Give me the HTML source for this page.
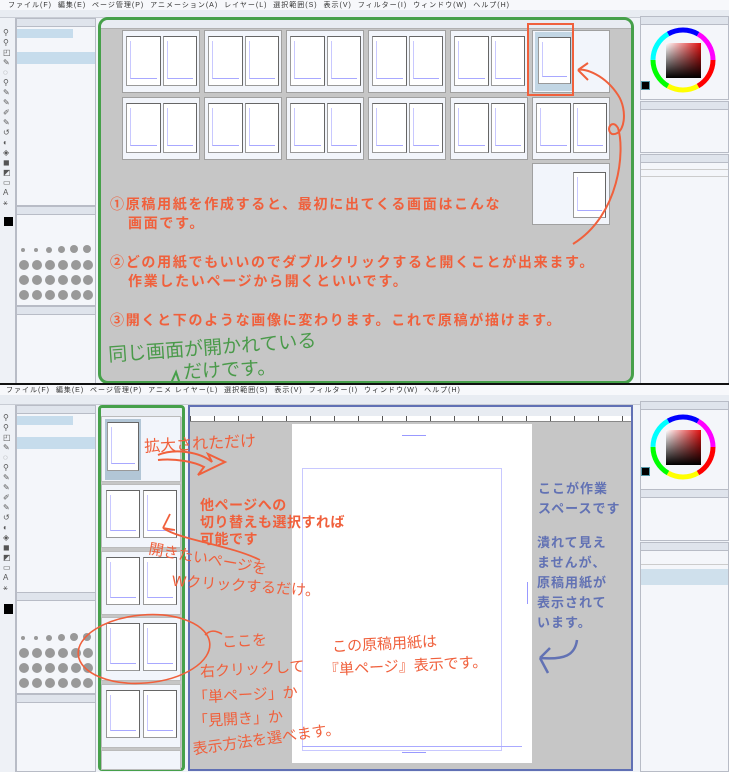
<!DOCTYPE html>
<html><head><meta charset="utf-8">
<style>
*{margin:0;padding:0;box-sizing:border-box}
body{width:729px;height:772px;position:relative;overflow:hidden;background:#f0f3f8;font-family:"Liberation Sans","Noto Sans CJK JP",sans-serif}
.a{position:absolute}
.menu{background:#f7f8fb;color:#333;font-size:7px;white-space:nowrap;letter-spacing:1px}
.tb{background:#e8ecf2;border-bottom:1px solid #c8ccd4}
.panel{background:#f4f6fa;border:1px solid #b8bcc6}
.ph{background:#dfe4ec;height:8px;border-bottom:1px solid #b8bcc6}
.box{position:absolute;background:#f2f5fb;border:1px solid #a0a0a0}
.pg{position:absolute;background:#fff;border:1px solid #999;border-top-color:#666;border-right-color:#666}
.pg:after{content:"";position:absolute;left:3px;right:3px;top:4px;bottom:6px;border-left:1px solid #c8c8ff;border-bottom:1px solid #a8a8ff}
.or{color:#f0603c;font-size:14px;letter-spacing:1.7px;font-weight:bold;white-space:nowrap}
.hw{color:#f0603c;font-size:15px;white-space:nowrap;transform:rotate(-3deg)}
.gr{color:#4a9a4a;font-size:19px;white-space:nowrap}
.bl{color:#6272b4;font-size:13px;letter-spacing:1px;line-height:20px;font-weight:bold}
.ti{position:absolute;left:3px;width:9px;height:7px;color:#555;font-size:9px;line-height:7px}
.dot{position:absolute;border-radius:50%;background:#999}
</style></head><body>

<!-- ===== TOP HALF ===== -->
<div class="a menu" style="left:0;top:0;width:729px;height:10px;padding-left:8px">ファイル(F)&nbsp;&nbsp;編集(E)&nbsp;&nbsp;ページ管理(P)&nbsp;&nbsp;アニメーション(A)&nbsp;&nbsp;レイヤー(L)&nbsp;&nbsp;選択範囲(S)&nbsp;&nbsp;表示(V)&nbsp;&nbsp;フィルター(I)&nbsp;&nbsp;ウィンドウ(W)&nbsp;&nbsp;ヘルプ(H)</div>
<div class="a tb" style="left:0;top:10px;width:729px;height:8px"></div>
<div class="a" style="left:0;top:18px;width:16px;height:367px;background:#eef1f6;border-right:1px solid #b8bcc6"></div>
<div class="a" style="left:3px;top:28px;width:10px;height:190px;color:#555;font-size:8px;line-height:10px">⚲<br>⚲<br>◰<br>✎<br>◌<br>⚲<br>✎<br>✎<br>✐<br>✎<br>↺<br>◐<br>◈<br>◼<br>◩<br>▭<br>A<br>⚹</div>
<div class="a panel" style="left:16px;top:18px;width:80px;height:188px"><div class="ph"></div>
<div style="height:9px;background:#c6dcec;margin-top:2px;width:56px"></div>
<div style="height:14px"></div><div style="height:12px;background:#c6dcec"></div></div>
<div class="a panel" style="left:16px;top:206px;width:80px;height:100px"><div class="ph"></div></div>
<div class="a panel" style="left:16px;top:306px;width:80px;height:78px"><div class="ph"></div></div>
<div class="a" style="left:4px;top:217px;width:9px;height:9px;background:#000"></div>

<div class="dot" style="left:21px;top:248px;width:4px;height:4px"></div><div class="dot" style="left:34px;top:248px;width:4px;height:4px"></div><div class="dot" style="left:46px;top:247px;width:6px;height:6px"></div><div class="dot" style="left:58px;top:246px;width:7px;height:7px"></div><div class="dot" style="left:70px;top:245px;width:8px;height:8px"></div><div class="dot" style="left:83px;top:245px;width:8px;height:8px"></div>
<div class="dot" style="left:19px;top:260px;width:10px;height:10px"></div><div class="dot" style="left:32px;top:260px;width:10px;height:10px"></div><div class="dot" style="left:45px;top:260px;width:10px;height:10px"></div><div class="dot" style="left:58px;top:260px;width:10px;height:10px"></div><div class="dot" style="left:71px;top:260px;width:10px;height:10px"></div><div class="dot" style="left:83px;top:260px;width:10px;height:10px"></div>
<div class="dot" style="left:19px;top:275px;width:10px;height:10px"></div><div class="dot" style="left:32px;top:275px;width:10px;height:10px"></div><div class="dot" style="left:45px;top:275px;width:10px;height:10px"></div><div class="dot" style="left:58px;top:275px;width:10px;height:10px"></div><div class="dot" style="left:71px;top:275px;width:10px;height:10px"></div><div class="dot" style="left:83px;top:275px;width:10px;height:10px"></div>
<div class="dot" style="left:19px;top:290px;width:10px;height:10px"></div><div class="dot" style="left:32px;top:290px;width:10px;height:10px"></div><div class="dot" style="left:45px;top:290px;width:10px;height:10px"></div><div class="dot" style="left:58px;top:290px;width:10px;height:10px"></div><div class="dot" style="left:71px;top:290px;width:10px;height:10px"></div><div class="dot" style="left:83px;top:290px;width:10px;height:10px"></div>

<div class="a" style="left:98px;top:17px;width:536px;height:367px;background:#c6c6c6;border:3px solid #46a04a;border-radius:10px;overflow:hidden">
 <div style="height:9px;background:#e8ecf2;border-bottom:1px solid #b0b0b0"></div>
</div>
<!-- row1 -->
<div class="box" style="left:122px;top:30px;width:78px;height:63px"><div class="pg" style="left:3px;top:5px;width:35px;height:50px"></div><div class="pg" style="left:40px;top:5px;width:34px;height:50px"></div></div>
<div class="box" style="left:204px;top:30px;width:78px;height:63px"><div class="pg" style="left:3px;top:5px;width:35px;height:50px"></div><div class="pg" style="left:40px;top:5px;width:34px;height:50px"></div></div>
<div class="box" style="left:286px;top:30px;width:78px;height:63px"><div class="pg" style="left:3px;top:5px;width:35px;height:50px"></div><div class="pg" style="left:40px;top:5px;width:34px;height:50px"></div></div>
<div class="box" style="left:368px;top:30px;width:78px;height:63px"><div class="pg" style="left:3px;top:5px;width:35px;height:50px"></div><div class="pg" style="left:40px;top:5px;width:34px;height:50px"></div></div>
<div class="box" style="left:450px;top:30px;width:78px;height:63px"><div class="pg" style="left:3px;top:5px;width:35px;height:50px"></div><div class="pg" style="left:40px;top:5px;width:34px;height:50px"></div></div>
<div class="box" style="left:532px;top:30px;width:78px;height:63px"><div style="position:absolute;left:2px;top:1px;width:38px;height:59px;background:#c2d6e4"></div><div class="pg" style="left:5px;top:6px;width:33px;height:47px"></div></div>
<!-- row2 -->
<div class="box" style="left:122px;top:97px;width:78px;height:63px"><div class="pg" style="left:3px;top:5px;width:35px;height:50px"></div><div class="pg" style="left:40px;top:5px;width:34px;height:50px"></div></div>
<div class="box" style="left:204px;top:97px;width:78px;height:63px"><div class="pg" style="left:3px;top:5px;width:35px;height:50px"></div><div class="pg" style="left:40px;top:5px;width:34px;height:50px"></div></div>
<div class="box" style="left:286px;top:97px;width:78px;height:63px"><div class="pg" style="left:3px;top:5px;width:35px;height:50px"></div><div class="pg" style="left:40px;top:5px;width:34px;height:50px"></div></div>
<div class="box" style="left:368px;top:97px;width:78px;height:63px"><div class="pg" style="left:3px;top:5px;width:35px;height:50px"></div><div class="pg" style="left:40px;top:5px;width:34px;height:50px"></div></div>
<div class="box" style="left:450px;top:97px;width:78px;height:63px"><div class="pg" style="left:3px;top:5px;width:35px;height:50px"></div><div class="pg" style="left:40px;top:5px;width:34px;height:50px"></div></div>
<div class="box" style="left:532px;top:97px;width:78px;height:63px"><div class="pg" style="left:3px;top:5px;width:35px;height:50px"></div><div class="pg" style="left:40px;top:5px;width:34px;height:50px"></div></div>
<div class="box" style="left:532px;top:163px;width:78px;height:62px"><div class="pg" style="left:40px;top:8px;width:33px;height:46px"></div></div>
<div class="a" style="left:527px;top:23px;width:47px;height:73px;border:2px solid #f0603c"></div>

<div class="a or" style="left:110px;top:194px">①原稿用紙を作成すると、最初に出てくる画面はこんな</div>
<div class="a or" style="left:128px;top:213px">画面です。</div>
<div class="a or" style="left:110px;top:252px">②どの用紙でもいいのでダブルクリックすると開くことが出来ます。</div>
<div class="a or" style="left:128px;top:271px">作業したいページから開くといいです。</div>
<div class="a or" style="left:110px;top:310px">③開くと下のような画像に変わります。これで原稿が描けます。</div>
<svg class="a" style="left:0;top:0" width="729" height="772">
<path d="M573 244 C620 215 625 150 618 128 C612 118 605 130 612 134 C625 136 628 110 618 95 C605 75 585 68 578 70 M578 70 L588 63 M578 70 L588 80" fill="none" stroke="#f0603c" stroke-width="2"/>
<path d="M158 452 L176 383 M168 390 L176 372 L182 390" fill="none" stroke="#46a04a" stroke-width="2"/>
<path d="M160 452 L152 440 M160 452 L168 442" fill="none" stroke="#46a04a" stroke-width="2"/>
</svg>
<div class="a gr" style="left:108px;top:333px;transform:rotate(-4deg)">同じ画面が開かれている</div>
<div class="a gr" style="left:183px;top:355px;transform:rotate(-3deg)">だけです。</div>

<div class="a panel" style="left:640px;top:16px;width:89px;height:84px"><div class="ph"></div></div>
<svg class="a" style="left:650px;top:27px" width="66" height="66"><defs><linearGradient id="sv" x1="0" y1="0" x2="1" y2="0"><stop offset="0" stop-color="#fff"/><stop offset="1" stop-color="#e01010"/></linearGradient><linearGradient id="sk" x1="0" y1="0" x2="0" y2="1"><stop offset="0" stop-color="#000" stop-opacity="0"/><stop offset="1" stop-color="#000"/></linearGradient></defs>
<circle cx="33" cy="33" r="30" fill="none" stroke="#f00" stroke-width="5" stroke-dasharray="31.4 200"/>
<circle cx="33" cy="33" r="30" fill="none" stroke="#ff0" stroke-width="5" stroke-dasharray="0 31.4 31.4 200"/>
<circle cx="33" cy="33" r="30" fill="none" stroke="#0f0" stroke-width="5" stroke-dasharray="0 62.8 31.4 200"/>
<circle cx="33" cy="33" r="30" fill="none" stroke="#0ff" stroke-width="5" stroke-dasharray="0 94.2 31.4 200"/>
<circle cx="33" cy="33" r="30" fill="none" stroke="#00f" stroke-width="5" stroke-dasharray="0 125.6 31.4 200"/>
<circle cx="33" cy="33" r="30" fill="none" stroke="#f0f" stroke-width="5" stroke-dasharray="0 157 31.4 200"/>
<rect x="16" y="16" width="35" height="35" fill="url(#sv)"/><rect x="16" y="16" width="35" height="35" fill="url(#sk)"/></svg>
<div class="a" style="left:641px;top:81px;width:9px;height:9px;background:#000;border:1px solid #59a"></div>
<div class="a panel" style="left:640px;top:101px;width:89px;height:52px"><div class="ph"></div></div>
<div class="a panel" style="left:640px;top:154px;width:89px;height:231px"><div class="ph"></div><div style="height:7px;border-bottom:1px solid #ccc"></div><div style="height:7px;border-bottom:1px solid #ccc"></div></div>

<div class="a" style="left:0;top:383px;width:729px;height:2px;background:#111"></div>

<!-- ===== BOTTOM HALF ===== -->
<div class="a menu" style="left:0;top:385px;width:729px;height:10px;padding-left:6px">ファイル(F)&nbsp;&nbsp;編集(E)&nbsp;&nbsp;ページ管理(P)&nbsp;&nbsp;アニメ&nbsp;レイヤー(L)&nbsp;&nbsp;選択範囲(S)&nbsp;&nbsp;表示(V)&nbsp;&nbsp;フィルター(I)&nbsp;&nbsp;ウィンドウ(W)&nbsp;&nbsp;ヘルプ(H)</div>
<div class="a tb" style="left:0;top:395px;width:729px;height:10px"></div>
<div class="a" style="left:0;top:405px;width:16px;height:367px;background:#eef1f6;border-right:1px solid #b8bcc6"></div>
<div class="a" style="left:3px;top:413px;width:10px;height:190px;color:#555;font-size:8px;line-height:10px">⚲<br>⚲<br>◰<br>✎<br>◌<br>⚲<br>✎<br>✎<br>✐<br>✎<br>↺<br>◐<br>◈<br>◼<br>◩<br>▭<br>A<br>⚹</div>
<div class="a panel" style="left:16px;top:405px;width:80px;height:190px"><div class="ph"></div>
<div style="height:9px;background:#c6dcec;margin-top:2px;width:56px"></div><div style="height:12px"></div><div style="height:12px;background:#c6dcec"></div></div>
<div class="a panel" style="left:16px;top:592px;width:80px;height:102px"><div class="ph"></div></div>
<div class="a panel" style="left:16px;top:694px;width:80px;height:78px"><div class="ph"></div></div>
<div class="a" style="left:4px;top:604px;width:9px;height:10px;background:#000"></div>
<div class="dot" style="left:21px;top:636px;width:4px;height:4px"></div><div class="dot" style="left:34px;top:636px;width:4px;height:4px"></div><div class="dot" style="left:46px;top:635px;width:6px;height:6px"></div><div class="dot" style="left:58px;top:634px;width:7px;height:7px"></div><div class="dot" style="left:70px;top:633px;width:8px;height:8px"></div><div class="dot" style="left:83px;top:633px;width:8px;height:8px"></div>
<div class="dot" style="left:19px;top:648px;width:10px;height:10px"></div><div class="dot" style="left:32px;top:648px;width:10px;height:10px"></div><div class="dot" style="left:45px;top:648px;width:10px;height:10px"></div><div class="dot" style="left:58px;top:648px;width:10px;height:10px"></div><div class="dot" style="left:71px;top:648px;width:10px;height:10px"></div><div class="dot" style="left:83px;top:648px;width:10px;height:10px"></div>
<div class="dot" style="left:19px;top:663px;width:10px;height:10px"></div><div class="dot" style="left:32px;top:663px;width:10px;height:10px"></div><div class="dot" style="left:45px;top:663px;width:10px;height:10px"></div><div class="dot" style="left:58px;top:663px;width:10px;height:10px"></div><div class="dot" style="left:71px;top:663px;width:10px;height:10px"></div><div class="dot" style="left:83px;top:663px;width:10px;height:10px"></div>
<div class="dot" style="left:19px;top:678px;width:10px;height:10px"></div><div class="dot" style="left:32px;top:678px;width:10px;height:10px"></div><div class="dot" style="left:45px;top:678px;width:10px;height:10px"></div><div class="dot" style="left:58px;top:678px;width:10px;height:10px"></div><div class="dot" style="left:71px;top:678px;width:10px;height:10px"></div><div class="dot" style="left:83px;top:678px;width:10px;height:10px"></div>

<div class="a" style="left:98px;top:405px;width:87px;height:366px;background:#c6c6c6;border:3px solid #46a04a;border-radius:4px;overflow:hidden">
 <div style="height:9px;background:#e8ecf2"></div>
</div>
<div class="box" style="left:101px;top:416px;width:80px;height:66px;border-color:#bbb"><div style="position:absolute;left:3px;top:2px;width:36px;height:61px;background:#b2c6d6"></div><div class="pg" style="left:5px;top:5px;width:32px;height:49px"></div></div>
<div class="box" style="left:101px;top:484px;width:80px;height:64px;border-color:#bbb"><div class="pg" style="left:4px;top:5px;width:34px;height:48px"></div><div class="pg" style="left:41px;top:5px;width:34px;height:48px"></div></div>
<div class="box" style="left:101px;top:551px;width:80px;height:64px;border-color:#bbb"><div class="pg" style="left:4px;top:5px;width:34px;height:48px"></div><div class="pg" style="left:41px;top:5px;width:34px;height:48px"></div></div>
<div class="box" style="left:101px;top:617px;width:80px;height:64px;border-color:#bbb"><div class="pg" style="left:4px;top:5px;width:34px;height:48px"></div><div class="pg" style="left:41px;top:5px;width:34px;height:48px"></div></div>
<div class="box" style="left:101px;top:684px;width:80px;height:64px;border-color:#bbb"><div class="pg" style="left:4px;top:5px;width:34px;height:48px"></div><div class="pg" style="left:41px;top:5px;width:34px;height:48px"></div></div>
<div class="box" style="left:101px;top:750px;width:80px;height:20px;border-color:#bbb"></div>

<div class="a" style="left:188px;top:405px;width:445px;height:366px;background:#c6c6c6;border:2px solid #6070b4;overflow:hidden">
 <div style="height:9px;background:#e8ecf2"></div>
 <div style="height:6px;background:#fff;border-bottom:1px solid #888;background-image:repeating-linear-gradient(90deg,#555 0 1px,transparent 1px 24px)"></div>
</div>
<div class="a" style="left:292px;top:424px;width:240px;height:339px;background:#fff"></div>
<div class="a" style="left:302px;top:468px;width:200px;height:283px;border:1px solid #c8c8ff"></div>
<div class="a" style="left:402px;top:435px;width:24px;height:1px;background:#99f"></div>
<div class="a" style="left:302px;top:746px;width:220px;height:1px;background:#aaf"></div>
<div class="a" style="left:402px;top:752px;width:24px;height:1px;background:#99f"></div>
<div class="a" style="left:527px;top:582px;width:1px;height:22px;background:#99f"></div>

<div class="a hw" style="left:144px;top:430px;font-size:16px">拡大されただけ</div>
<svg class="a" style="left:0;top:0" width="729" height="772">
<path d="M158 455 C175 448 200 452 212 462 L208 454 L225 462 L198 475 L204 467 C195 462 175 458 158 460" fill="none" stroke="#f0603c" stroke-width="2"/>
<path d="M260 560 C230 545 180 540 163 528 M163 528 L170 514 M163 528 L175 530" fill="none" stroke="#f0603c" stroke-width="1.8"/>
<ellipse cx="144" cy="649" rx="66" ry="34" transform="rotate(-5 144 649)" fill="none" stroke="#f0603c" stroke-width="1.6"/>
<path d="M205 635 C210 630 215 630 222 634" fill="none" stroke="#f0603c" stroke-width="1.6"/>
<path d="M577 640 C575 655 565 660 540 658 M540 658 L550 648 M540 658 L548 673" fill="none" stroke="#6272b4" stroke-width="2.5"/>
</svg>
<div class="a or" style="left:200px;top:495px;letter-spacing:0.5px">他ページへの</div>
<div class="a or" style="left:200px;top:512px;letter-spacing:0.5px">切り替えも選択すれば</div>
<div class="a or" style="left:200px;top:529px;letter-spacing:0.5px">可能です</div>
<div class="a hw" style="left:148px;top:548px;transform:rotate(10deg)">開きたいページを</div>
<div class="a hw" style="left:172px;top:575px;transform:rotate(4deg)">Wクリックするだけ。</div>
<div class="a hw" style="left:222px;top:630px">ここを</div>
<div class="a hw" style="left:200px;top:658px">右クリックして</div>
<div class="a hw" style="left:193px;top:684px">「単ページ」か</div>
<div class="a hw" style="left:193px;top:708px">「見開き」か</div>
<div class="a hw" style="left:192px;top:728px;transform:rotate(-8deg)">表示方法を選べます。</div>
<div class="a hw" style="left:332px;top:633px">この原稿用紙は</div>
<div class="a hw" style="left:324px;top:655px">『単ページ』表示です。</div>
<div class="a bl" style="left:538px;top:479px;width:100px">ここが作業<br>スペースです</div>
<div class="a bl" style="left:537px;top:533px;width:100px">潰れて見え<br>ませんが、<br>原稿用紙が<br>表示されて<br>います。</div>

<div class="a panel" style="left:640px;top:401px;width:89px;height:104px"><div class="ph"></div></div>
<svg class="a" style="left:650px;top:414px" width="66" height="66"><defs><linearGradient id="sv2" x1="0" y1="0" x2="1" y2="0"><stop offset="0" stop-color="#fff"/><stop offset="1" stop-color="#e01010"/></linearGradient><linearGradient id="sk2" x1="0" y1="0" x2="0" y2="1"><stop offset="0" stop-color="#000" stop-opacity="0"/><stop offset="1" stop-color="#000"/></linearGradient></defs>
<circle cx="33" cy="33" r="30" fill="none" stroke="#f00" stroke-width="5" stroke-dasharray="31.4 200"/>
<circle cx="33" cy="33" r="30" fill="none" stroke="#ff0" stroke-width="5" stroke-dasharray="0 31.4 31.4 200"/>
<circle cx="33" cy="33" r="30" fill="none" stroke="#0f0" stroke-width="5" stroke-dasharray="0 62.8 31.4 200"/>
<circle cx="33" cy="33" r="30" fill="none" stroke="#0ff" stroke-width="5" stroke-dasharray="0 94.2 31.4 200"/>
<circle cx="33" cy="33" r="30" fill="none" stroke="#00f" stroke-width="5" stroke-dasharray="0 125.6 31.4 200"/>
<circle cx="33" cy="33" r="30" fill="none" stroke="#f0f" stroke-width="5" stroke-dasharray="0 157 31.4 200"/>
<rect x="16" y="16" width="35" height="35" fill="url(#sv2)"/><rect x="16" y="16" width="35" height="35" fill="url(#sk2)"/></svg>
<div class="a" style="left:641px;top:467px;width:9px;height:9px;background:#000;border:1px solid #59a"></div>
<div class="a panel" style="left:640px;top:489px;width:89px;height:52px"><div class="ph"></div></div>
<div class="a panel" style="left:640px;top:542px;width:89px;height:230px"><div class="ph"></div><div style="height:14px;border-bottom:1px solid #ccc"></div>
<div style="height:16px;background:#cfe0ec;margin-top:4px"></div></div>
</body></html>
